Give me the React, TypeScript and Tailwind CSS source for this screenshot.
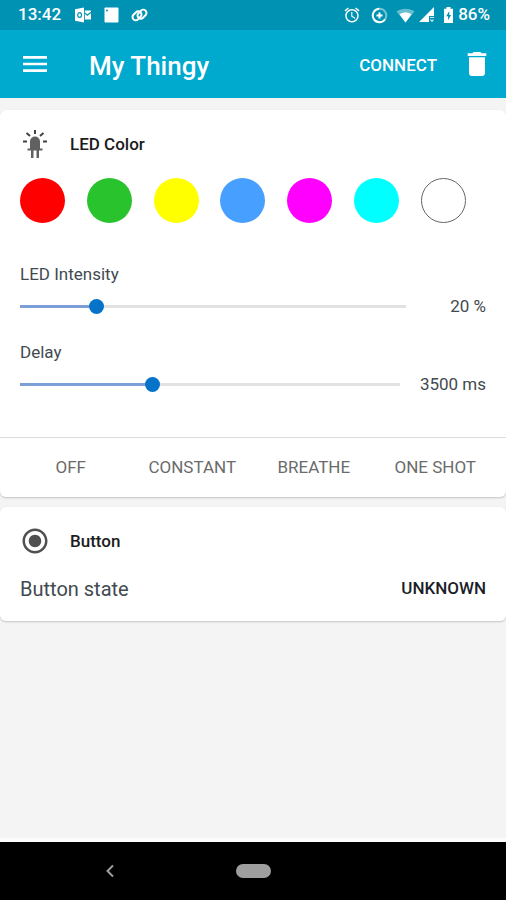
import { useState } from "react";
import {
  MdAccessAlarm,
  MdDelete,
  MdMenu,
  MdRadioButtonChecked,
} from "react-icons/md";

const COLORS = [
  { name: "Red", className: "bg-[#ff0000]" },
  { name: "Green", className: "bg-[#29c32e]" },
  { name: "Yellow", className: "bg-[#ffff00]" },
  { name: "Blue", className: "bg-[#479fff]" },
  { name: "Magenta", className: "bg-[#ff00ff]" },
  { name: "Cyan", className: "bg-[#00ffff]" },
  { name: "White", className: "bg-white border border-[#666]" },
];

const MODES = ["OFF", "CONSTANT", "BREATHE", "ONE SHOT"];

const OutlookIcon = () => (
  <svg width="17" height="16" viewBox="0 0 17 16" fill="#fff">
    <path d="M0 2.2 9 .5v15L0 13.8z" />
    <path d="M9.8 3.5H16v9H9.8z" />
    <g fill="none" stroke="#0092b2" strokeWidth="1.2">
      <ellipse cx="4.6" cy="8" rx="1.9" ry="2.3" />
      <path d="m9.8 6 2.6 2.2L16 5.2" />
    </g>
  </svg>
);

const NoteIcon = () => (
  <svg width="15" height="16" viewBox="0 0 15 16">
    <rect x=".5" y=".5" width="14" height="15" rx=".8" fill="#fff" />
    <circle cx="3" cy="3.5" r="1" fill="#0092b2" />
  </svg>
);

const ChainIcon = () => (
  <svg
    width="17"
    height="16"
    viewBox="0 0 17 16"
    fill="none"
    stroke="#fff"
    strokeWidth="2"
  >
    <rect x="1" y="5.6" width="10" height="6.4" rx="3.2" transform="rotate(-45 6 8.8)" />
    <rect x="6" y="4" width="10" height="6.4" rx="3.2" transform="rotate(-45 11 7.2)" />
  </svg>
);

const DataSaverIcon = () => (
  <svg width="17" height="17" viewBox="0 0 17 17" fill="none" stroke="#fff">
    <path d="M8.5 1.8a6.7 6.7 0 0 1 5.6 10.4" strokeWidth="2" strokeOpacity=".45" />
    <path d="M8.5 1.8a6.7 6.7 0 1 0 5.6 10.4" strokeWidth="2" />
    <path d="M8.5 5.5v6M5.5 8.5h6" strokeWidth="2" />
  </svg>
);

const WifiIcon = () => (
  <svg width="19" height="15" viewBox="0 0 19 15" fill="#fff">
    <path d="M.5 3.5C5.5-.3 13.5-.3 18.5 3.5L9.500 14.500z" fillOpacity=".4" />
    <path d="M3.500 6.300c3.800-2.500 8.200-2.500 12 0L9.500 14.500z" />
  </svg>
);

const SignalIcon = () => (
  <svg width="16" height="16" viewBox="0 0 16 16" fill="#fff">
    <path d="M15 0v9h-5v6H0z" />
    <path d="M11 10.500h4M11.500 12.500l1.500 1.800 1.500-1.800" fill="none" stroke="#fff" strokeOpacity=".8" strokeWidth="1.200" />
  </svg>
);

const BatteryIcon = () => (
  <svg width="11" height="16" viewBox="0 0 11 16">
    <path d="M3.500 0h4v1.700H10V16H1V1.700h2.500z" fill="#fff" />
    <path d="M6.300 4 3.200 9.300h1.900v4L8 8H6.300z" fill="#0092b2" />
  </svg>
);

const LedIcon = () => (
  <svg width="26" height="30" viewBox="0 0 26 30" fill="#616161">
    <path d="M8 19.500V12.500a5 5 0 0 1 10 0v7h2.500v2H17V29h-2.500v-7.500h-3V29H9v-7.500H5.500v-2z" />
    <path
      d="M13 1v4M4.500 4l3.500 3M21.500 4 18 7M1 12.500h4M21 12.500h4"
      stroke="#424242"
      strokeWidth="2"
    />
  </svg>
);

interface SliderProps {
  id: string;
  label: string;
  unit: string;
  max: number;
  step: number;
  initial: number;
  valueClassName?: string;
}

const Slider = ({
  id,
  label,
  unit,
  max,
  step,
  initial,
  valueClassName = "",
}: SliderProps) => {
  const [value, setValue] = useState(initial);
  const percent = (value / max) * 100;

  return (
    <div>
      <label htmlFor={id} className="block text-[17px] leading-6">
        {label}
      </label>
      <div className="mt-2 flex h-6 items-center gap-5">
        <div
          className="min-w-0 flex-1 bg-[length:100%_3px] bg-center bg-no-repeat"
          style={{
            backgroundImage: `linear-gradient(to right, #7c9fd8 ${percent}%, #e2e2e2 ${percent}%)`,
          }}
        >
          {/* runs half a thumb past both ends of the track */}
          <input
            id={id}
            type="range"
            min={0}
            max={max}
            step={step}
            value={value}
            onChange={(e) => setValue(Number(e.target.value))}
            className="-mx-2 block h-4 w-[calc(100%+16px)] cursor-pointer appearance-none bg-transparent [&::-webkit-slider-thumb]:h-[15px] [&::-webkit-slider-thumb]:w-[15px] [&::-webkit-slider-thumb]:appearance-none [&::-webkit-slider-thumb]:rounded-full [&::-webkit-slider-thumb]:bg-[#0574c8]"
          />
        </div>
        <output
          htmlFor={id}
          className={`text-right text-[17px] leading-6 whitespace-nowrap ${valueClassName}`}
        >
          {value} {unit}
        </output>
      </div>
    </div>
  );
};

const App = () => {
  const [selected, setSelected] = useState("");

  return (
    <div className="flex min-h-screen flex-col bg-[#f4f4f4] font-[Roboto,sans-serif] text-[#424a50]">
      <div className="flex h-[30px] items-center bg-[#0092b2] pr-4 pl-[18px] text-[17px] font-medium text-white">
        <span>13:42</span>
        <div className="ml-[14px] flex items-center gap-3">
          <OutlookIcon />
          <NoteIcon />
          <ChainIcon />
        </div>
        <div className="ml-auto flex items-center gap-1">
          <div className="mr-1 flex items-center gap-[10px]">
            <MdAccessAlarm size={18} />
            <DataSaverIcon />
          </div>
          <WifiIcon />
          <SignalIcon />
          <div className="ml-1 flex items-center gap-1">
            <BatteryIcon />
            <span>86%</span>
          </div>
        </div>
      </div>

      <header className="flex h-[68px] items-center bg-[#00a9ce] pr-[13px] pl-[19px] text-white">
        <button type="button" aria-label="Menu">
          <MdMenu size={32} />
        </button>
        <h1 className="ml-[38px] pt-1 text-[26px] font-medium">My Thingy</h1>
        <button type="button" className="ml-auto pt-1 text-[17px] font-medium">
          CONNECT
        </button>
        <button type="button" aria-label="Delete" className="ml-6">
          <MdDelete size={32} />
        </button>
      </header>

      <main className="mt-3 flex flex-col gap-[10px]">
        <section className="rounded-md bg-white shadow-[0_1px_2px_rgba(0,0,0,0.2)]">
          <div className="px-5 pt-[18px]">
            <div className="flex h-8 items-center gap-5">
              <span className="flex w-[30px] justify-center">
                <LedIcon />
              </span>
              <h2 className="pt-0.5 text-[17px] font-medium text-[#1c1c1c]">
                LED Color
              </h2>
            </div>
            <div className="mt-[18px] flex justify-between pr-5">
              {COLORS.map((color) => (
                <button
                  key={color.name}
                  type="button"
                  aria-label={color.name}
                  className={`h-[45px] w-[45px] rounded-full ${color.className}`}
                />
              ))}
            </div>
            <div className="mt-[39px] flex flex-col gap-[22px] pb-[41px]">
              <Slider
                id="intensity"
                label="LED Intensity"
                unit="%"
                max={100}
                step={1}
                initial={20}
                valueClassName="w-[60px]"
              />
              <Slider
                id="delay"
                label="Delay"
                unit="ms"
                max={10000}
                step={100}
                initial={3500}
              />
            </div>
          </div>
          <div className="grid grid-cols-4 border-t border-[#d9dcde] px-[10px]">
            {MODES.map((mode) => (
              <button
                key={mode}
                type="button"
                onClick={() => setSelected(mode)}
                className={`h-[59px] text-[17px] ${
                  selected === mode ? "text-[#0574c8]" : "text-[#6b6b6b]"
                }`}
              >
                {mode}
              </button>
            ))}
          </div>
        </section>

        <section className="rounded-md bg-white px-5 pt-[18px] pb-[18px] shadow-[0_1px_2px_rgba(0,0,0,0.2)]">
          <div className="flex h-8 items-center gap-5">
            <MdRadioButtonChecked size={30} className="text-[#505050]" />
            <h2 className="pt-0.5 text-[17px] font-medium text-[#1c1c1c]">
              Button
            </h2>
          </div>
          <div className="mt-[18px] flex h-7 items-center justify-between">
            <span className="text-[20px]">Button state</span>
            <span className="text-[17px] font-medium text-[#1c1f2a]">
              UNKNOWN
            </span>
          </div>
        </section>
      </main>

      <nav className="mt-auto grid h-[62px] grid-cols-[1fr_auto_1fr] items-center border-t-4 border-[#fcfcfc] bg-black">
        <button type="button" aria-label="Back" className="ml-[103px] w-4">
          <svg
            width="14"
            height="14"
            viewBox="0 0 14 14"
            fill="none"
            stroke="#9e9e9e"
            strokeWidth="2"
          >
            <path d="M10 1.500 4.500 7l5.500 5.500" />
          </svg>
        </button>
        <button
          type="button"
          aria-label="Home"
          className="h-[14px] w-[35px] rounded-full bg-[#9e9e9e]"
        />
      </nav>
    </div>
  );
};

export default App;
